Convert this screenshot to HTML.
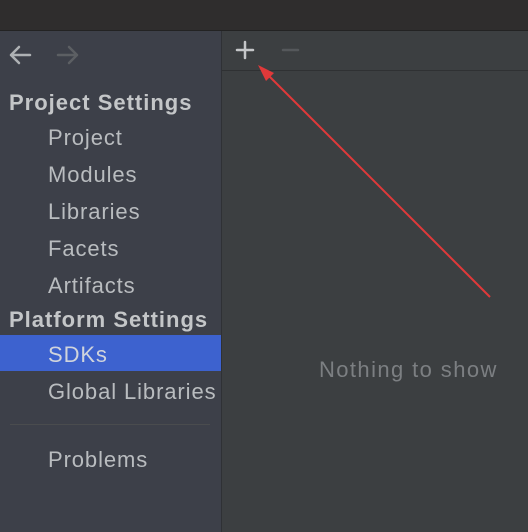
<!DOCTYPE html><html><head><style>
body{margin:0;width:528px;height:532px;overflow:hidden;background:#3c3f41;font-family:"Liberation Sans",sans-serif;position:relative}
.top{position:absolute;left:0;top:0;width:528px;height:30px;background:#2f2d2d;border-bottom:1px solid #232323}
.left{position:absolute;left:0;top:31px;width:221px;height:501px;background:#3d4049;border-right:1px solid #2f3135}
.t{position:absolute;font-size:22px;color:#b9bcbf;white-space:nowrap;line-height:36px;height:36px;letter-spacing:0.9px}
.h{font-weight:bold;left:9px;color:#c4c6c8;letter-spacing:1px}
.i{left:48px}
.sel{position:absolute;left:0;top:335px;width:221px;height:36px;background:#3d62cf}
.tb{position:absolute;left:222px;top:70px;width:306px;height:1px;background:#2f3133}
</style></head><body>
<div class="top"></div>
<div class="left"></div>
<div class="sel"></div>
<div class="tb"></div>
<svg style="position:absolute;left:0;top:0" width="528" height="532">
<g fill="none" stroke-width="2.5" stroke-linecap="round" stroke-linejoin="round">
<path d="M11 55H30M19 47L11 55L19 63" stroke="#aeb1b4"/>
<path d="M58 55H77M69 47L77 55L69 63" stroke="#5c5f63"/>
<path d="M245 42V58M237 50H253" stroke="#c5c7c9"/>
<path d="M283 50H298" stroke="#55585b"/>
</g>
<line x1="490" y1="297" x2="265" y2="72" stroke="#e0393a" stroke-width="2"/><polygon points="258,65 274,73 266,81" fill="#e0393a"/></svg>
<div class="t h" style="top:85px">Project Settings</div>
<div class="t i" style="top:120px">Project</div>
<div class="t i" style="top:157px">Modules</div>
<div class="t i" style="top:194px">Libraries</div>
<div class="t i" style="top:231px">Facets</div>
<div class="t i" style="top:268px">Artifacts</div>
<div class="t h" style="top:302px">Platform Settings</div>
<div class="t i" style="top:337px;color:#d0d4dc">SDKs</div>
<div class="t i" style="top:374px">Global Libraries</div>
<div style="position:absolute;left:10px;top:424px;width:200px;height:1px;background:#4a4c4e"></div>
<div class="t i" style="top:442px">Problems</div>
<div class="t" style="left:319px;top:352px;color:#7c7f82;letter-spacing:1.4px">Nothing to show</div>
</body></html>
